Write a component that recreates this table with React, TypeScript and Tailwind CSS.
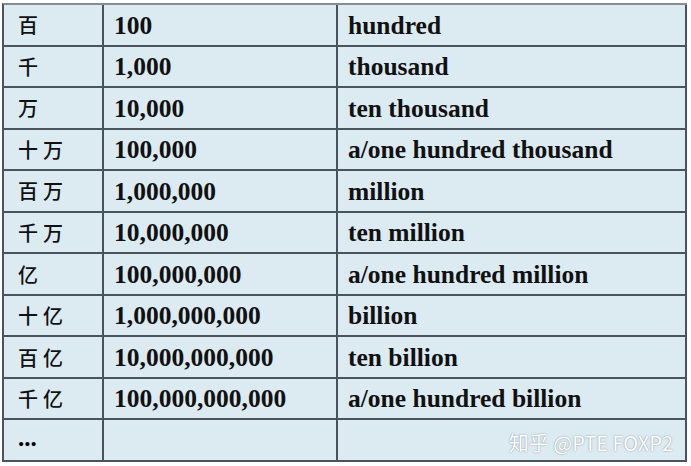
const rows: [string, string, string][] = [
  ['百', '100', 'hundred'],
  ['千', '1,000', 'thousand'],
  ['万', '10,000', 'ten thousand'],
  ['十万', '100,000', 'a/one hundred thousand'],
  ['百万', '1,000,000', 'million'],
  ['千万', '10,000,000', 'ten million'],
  ['亿', '100,000,000', 'a/one hundred million'],
  ['十亿', '1,000,000,000', 'billion'],
  ['百亿', '10,000,000,000', 'ten billion'],
  ['千亿', '100,000,000,000', 'a/one hundred billion'],
  ['...', '', ''],
]

const serif = "font-['Liberation_Serif','Times_New_Roman',serif]"

const App = () => {
  return (
    <div className="h-[466px] w-[691px] bg-white pl-[2px] pt-[3px]">
      <div className="grid h-[459px] w-[685px] grid-cols-[100px_234px_349px] grid-rows-[repeat(11,minmax(0,1fr))] border-l-2 border-t-2 border-l-[#4a545e] border-t-[#858d95] bg-[#dcebf2]">
        {rows.map(([zh, num, en], i) => {
          const last = i === rows.length - 1
          return [
            <div
              key={`zh-${i}`}
              className="flex items-center border-b-2 border-r-2 border-[#4a545e] pl-[14px] pt-[1px]"
            >
              {last ? (
                <span className={`${serif} -mt-[6px] text-[25px] font-bold leading-none text-black`}>
                  ...
                </span>
              ) : (
                <span className="font-['Noto_Sans_CJK_SC',sans-serif] text-[20px] font-medium leading-none tracking-[5px] text-[#111]">
                  {zh}
                </span>
              )}
            </div>,
            <div
              key={`num-${i}`}
              className={`flex items-center border-b-2 border-r-2 border-[#4a545e] pl-[10px] pt-[1px] ${serif} text-[25.5px] font-bold leading-none text-[#111]`}
            >
              {num}
            </div>,
            <div
              key={`en-${i}`}
              className={`flex items-center border-b-2 border-r-2 border-[#4a545e] pl-[10px] pt-[1px] ${serif} text-[25.5px] font-bold leading-none text-[#111]`}
            >
              {last ? (
                <span className="ml-auto mr-[12px] mt-[4px] font-['Noto_Sans_CJK_SC',sans-serif] text-[20px] font-normal text-white [text-shadow:0_0_1.5px_#6f7a80]">
                  知乎 @PTE FOXP2
                </span>
              ) : (
                en
              )}
            </div>,
          ]
        })}
      </div>
    </div>
  )
}

export default App
